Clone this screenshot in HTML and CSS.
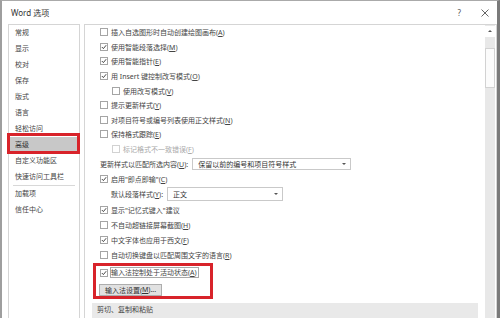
FILE: index.html
```html
<!DOCTYPE html>
<html lang="zh-CN">
<head>
<meta charset="utf-8">
<title>Word 选项</title>
<link rel="stylesheet" href="styles.css">
</head>
<body>
<div class="window">
  <div class="titlebar">
    <span class="title">Word 选项</span>
    <span class="help">?</span>
    <span class="close"><svg viewBox="0 0 8 8" width="8" height="8"><path d="M0.5 0.5 L7.5 7.5 M7.5 0.5 L0.5 7.5" stroke="#555" stroke-width="0.9" fill="none"/></svg></span>
  </div>
  <div class="main">
    <nav class="nav">
      <div class="nav-item">常规</div>
      <div class="nav-item">显示</div>
      <div class="nav-item">校对</div>
      <div class="nav-item">保存</div>
      <div class="nav-item">版式</div>
      <div class="nav-item">语言</div>
      <div class="nav-item">轻松访问</div>
      <div class="nav-item active">高级</div>
      <div class="nav-item">自定义功能区</div>
      <div class="nav-item">快速访问工具栏</div>
      <div class="nav-sep"></div>
      <div class="nav-item">加载项</div>
      <div class="nav-item">信任中心</div>
    </nav>
    <div class="content">
      <div class="scroll">
        <div class="row"><span class="cb"></span><span class="lbl">插入自选图形时自动创建绘图画布(<u>A</u>)</span></div>
        <div class="row"><span class="cb on"><svg viewBox="0 0 6 6"><path d="M0.8 3 L2.4 4.6 L5.2 1.2"/></svg></span><span class="lbl">使用智能段落选择(<u>M</u>)</span></div>
        <div class="row"><span class="cb on"><svg viewBox="0 0 6 6"><path d="M0.8 3 L2.4 4.6 L5.2 1.2"/></svg></span><span class="lbl">使用智能指针(<u>E</u>)</span></div>
        <div class="row"><span class="cb on"><svg viewBox="0 0 6 6"><path d="M0.8 3 L2.4 4.6 L5.2 1.2"/></svg></span><span class="lbl">用 Insert 键控制改写模式(<u>O</u>)</span></div>
        <div class="row ind"><span class="cb"></span><span class="lbl">使用改写模式(<u>V</u>)</span></div>
        <div class="row"><span class="cb"></span><span class="lbl">提示更新样式(<u>Y</u>)</span></div>
        <div class="row"><span class="cb"></span><span class="lbl">对项目符号或编号列表使用正文样式(<u>N</u>)</span></div>
        <div class="row"><span class="cb"></span><span class="lbl">保持格式跟踪(<u>E</u>)</span></div>
        <div class="row ind off"><span class="cb"></span><span class="lbl">标记格式不一致错误(<u>F</u>)</span></div>
        <div class="row t"><span class="lbl">更新样式以匹配所选内容(<u>U</u>):</span><span class="select s1">保留以前的编号和项目符号样式</span></div>
        <div class="row t"><span class="cb on"><svg viewBox="0 0 6 6"><path d="M0.8 3 L2.4 4.6 L5.2 1.2"/></svg></span><span class="lbl">启用"即点即输"(<u>C</u>)</span></div>
        <div class="row t sub"><span class="lbl">默认段落样式(<u>Y</u>):</span><span class="select s2">正文</span></div>
        <div class="row t"><span class="cb on"><svg viewBox="0 0 6 6"><path d="M0.8 3 L2.4 4.6 L5.2 1.2"/></svg></span><span class="lbl">显示"记忆式键入"建议</span></div>
        <div class="row t"><span class="cb"></span><span class="lbl">不自动超链接屏幕截图(<u>H</u>)</span></div>
        <div class="row t"><span class="cb on"><svg viewBox="0 0 6 6"><path d="M0.8 3 L2.4 4.6 L5.2 1.2"/></svg></span><span class="lbl">中文字体也应用于西文(<u>F</u>)</span></div>
        <div class="row t"><span class="cb"></span><span class="lbl">自动切换键盘以匹配周围文字的语言(<u>R</u>)</span></div>
        <div class="annot">
          <div class="row in"><span class="cb on"><svg viewBox="0 0 6 6"><path d="M0.8 3 L2.4 4.6 L5.2 1.2"/></svg></span><span class="lbl focus">输入法控制处于活动状态(<u>A</u>)</span></div>
          <div class="btn">输入法设置(<u>M</u>)...</div>
        </div>
        <div class="section">剪切、复制和粘贴</div>
      </div>
      <div class="scrollbar">
        <div class="sb-up"></div>
        <div class="sb-thumb"></div>
      </div>
    </div>
  </div>
</div>
</body>
</html>
```
FILE: styles.css
```css
* { box-sizing: border-box; margin: 0; padding: 0; }
body {
  width: 500px;
  height: 318px;
  overflow: hidden;
  background: #fff;
  font-family: "Noto Sans", "Noto Sans CJK SC", sans-serif;
  color: #444;
}
u { text-decoration: underline; text-underline-offset: 1px; }
.window {
  width: 500px;
  height: 318px;
  border-top: 1px solid #aaa;
  border-left: 2px solid #9e9e9e;
  border-right: 3px solid #7a7a7a;
  display: flex;
  flex-direction: column;
  overflow: hidden;
}
.titlebar {
  height: 23px;
  flex: none;
  display: flex;
  align-items: center;
  padding-left: 9px;
}
.title { flex: 1; font-size: 8px; color: #333; }
.help { font-size: 8px; color: #555; margin-right: 20px; }
.close { width: 8px; height: 8px; margin-right: 8px; display: flex; }

.main {
  flex: 1;
  min-height: 0;
  display: flex;
  gap: 4px;
  padding-left: 6px;
}
.nav {
  width: 72px;
  flex: none;
  border: 1px solid #d5d5d5;
  border-bottom: none;
}
.nav-item {
  height: 16px;
  line-height: 16px;
  padding-left: 6px;
  font-size: 7px;
  color: #444;
  white-space: nowrap;
}
.nav-item.active {
  position: relative;
  background: #c8c8c8;
  color: #333;
}
.nav-item.active::after {
  content: "";
  position: absolute;
  left: -2px;
  right: -1px;
  top: -4px;
  bottom: -1px;
  border: 3px solid #d8232a;
}
.nav-sep { height: 1px; background: #d8d8d8; margin: 0 4px 0 4px; }

.content {
  flex: 1;
  min-width: 0;
  display: flex;
  border: 1px solid #d5d5d5;
  border-bottom: none;
}
.scroll { flex: 1; min-width: 0; overflow: hidden; }
.row {
  height: 14.6px;
  display: flex;
  align-items: center;
  padding-left: 15px;
  font-size: 7px;
  color: #444;
  white-space: nowrap;
}
.row.t { height: 15.2px; }
.row.ind { padding-left: 27px; }
.row.sub { padding-left: 26px; }
.row.off { color: #aaa; }
.row.off .cb { border-color: #d2d2d2; }
.cb {
  width: 8px;
  height: 8px;
  flex: none;
  border: 1px solid #a5a5a5;
  background: #fff;
  margin-right: 3px;
  display: flex;
}
.cb svg { width: 6px; height: 6px; }
.cb svg path { fill: none; stroke: #333; stroke-width: 0.9; }
.select {
  position: relative;
  display: flex;
  align-items: center;
  margin-left: 4px;
  padding-left: 5px;
  border: 1px solid #c9c9c9;
  font-size: 7px;
  color: #333;
  background: #fff;
}
.select::after {
  content: "";
  position: absolute;
  right: 4px;
  top: 50%;
  margin-top: -1px;
  border-left: 2px solid transparent;
  border-right: 2px solid transparent;
  border-top: 2.5px solid #555;
}
.s1 { width: 159px; height: 12px; }
.s2 { width: 116px; height: 14px; }

.annot {
  width: 120px;
  margin-left: 8px;
  border: 3px solid #d8232a;
  padding-left: 4px;
}
.row.in { padding-left: 0; height: 14px; }
.row.in .cb { margin-right: 2px; }
.lbl.focus {
  border: 1px solid #a8a8a8;
  height: 11px;
  line-height: 9px;
  padding-right: 1px;
}
.btn {
  margin-top: 4px;
  margin-left: -1px;
  width: 63px;
  height: 12px;
  border: 1px solid #adadad;
  background: #e1e1e1;
  font-size: 7px;
  color: #333;
  display: flex;
  align-items: center;
  justify-content: center;
  white-space: nowrap;
}
.section {
  margin: 4px 7px 0 7px;
  height: 20px;
  background: #e9e9e9;
  padding-left: 5px;
  font-size: 7px;
  line-height: 14px;
  color: #444;
}

.scrollbar {
  width: 10px;
  flex: none;
  margin-right: 1px;
  background: #e8e8e8;
  display: flex;
  flex-direction: column;
  align-items: center;
}
.sb-up {
  width: 10px;
  height: 11px;
  margin-top: 1px;
  background: #fff;
  position: relative;
}
.sb-up::after {
  content: "";
  position: absolute;
  left: 3px;
  top: 4px;
  border-left: 2px solid transparent;
  border-right: 2px solid transparent;
  border-bottom: 2.5px solid #555;
}
.sb-thumb {
  width: 10px;
  height: 40px;
  margin-top: 11px;
  background: #fbfbfb;
  border: 1px solid #d2d2d2;
}
```
